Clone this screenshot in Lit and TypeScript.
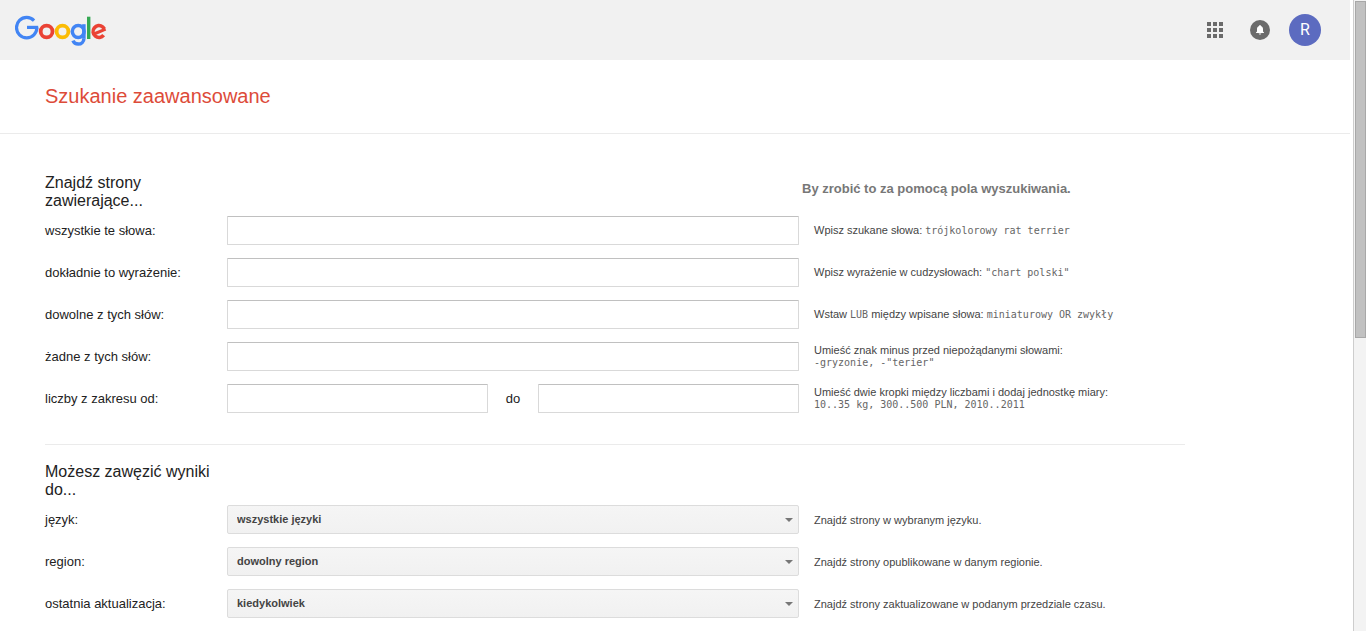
import { LitElement, html, css, svg, TemplateResult } from "lit";
import { customElement } from "lit/decorators.js";

interface Field {
  id: string;
  label: string;
  hint: TemplateResult;
  options?: string[];
  range?: boolean;
}

const code = (text: string) => html`<span class="mono">${text}</span>`;

const QUERY_FIELDS: Field[] = [
  { id: "all", label: "wszystkie te słowa:", hint: html`Wpisz szukane słowa: ${code("trójkolorowy rat terrier")}` },
  { id: "exact", label: "dokładnie to wyrażenie:", hint: html`Wpisz wyrażenie w cudzysłowach: ${code('"chart polski"')}` },
  { id: "any", label: "dowolne z tych słów:", hint: html`Wstaw ${code("LUB")} między wpisane słowa: ${code("miniaturowy OR zwykły")}` },
  { id: "none", label: "żadne z tych słów:", hint: html`Umieść znak minus przed niepożądanymi słowami:<br />${code('-gryzonie, -"terier"')}` },
  { id: "from", label: "liczby z zakresu od:", range: true, hint: html`Umieść dwie kropki między liczbami i dodaj jednostkę miary:<br />${code("10..35 kg, 300..500 PLN, 2010..2011")}` },
];

const FILTER_FIELDS: Field[] = [
  { id: "lang", label: "język:", options: ["wszystkie języki"], hint: html`Znajdź strony w wybranym języku.` },
  { id: "region", label: "region:", options: ["dowolny region"], hint: html`Znajdź strony opublikowane w danym regionie.` },
  { id: "updated", label: "ostatnia aktualizacja:", options: ["kiedykolwiek"], hint: html`Znajdź strony zaktualizowane w podanym przedziale czasu.` },
];

@customElement("app-header")
export class AppHeader extends LitElement {
  static styles = css`
    :host {
      display: flex;
      align-items: center;
      justify-content: space-between;
      height: 60px;
      padding: 0 29px 0 15px;
      background: #f1f1f1;
    }
    .logo, .logo svg, .icon svg { display: block; }
    .tools { display: flex; align-items: center; gap: 19px; }
    .icon {
      display: block;
      padding: 0;
      border: 0;
      background: none;
    }
    .apps { margin-right: 8px; }
    .avatar {
      width: 32px;
      height: 32px;
      padding: 0;
      border: 0;
      border-radius: 50%;
      background: #5c6bc0;
      color: #fff;
      font: 16px/32px Roboto, "Liberation Sans", sans-serif;
    }
  `;

  render() {
    const dots = [0, 6, 12].flatMap((y) =>
      [0, 6, 12].map((x) => svg`<rect x=${x} y=${y} width="4" height="4" fill="#6b6b6b"></rect>`)
    );
    return html`
      <a class="logo" href="#" aria-label="Google">
        <svg width="92" height="32" viewBox="15 14 92 32" fill="none" stroke-width="3.8">
          <g stroke="#4285f4" stroke-width="3.2">
            <circle cx="26.7" cy="27.6" r="10.2" pathLength="360" stroke-dasharray="316 44"></circle>
            <line x1="27" y1="27.4" x2="38.2" y2="27.4"></line>
          </g>
          <circle cx="46.6" cy="31.5" r="5.9" stroke="#ea4335"></circle>
          <circle cx="62.5" cy="31.5" r="5.9" stroke="#fbbc05"></circle>
          <g stroke="#4285f4" stroke-width="3.5">
            <circle cx="78.2" cy="31.5" r="5.9"></circle>
            <line x1="83.9" y1="24.2" x2="83.9" y2="38.7"></line>
            <circle cx="78.2" cy="38.4" r="5.7" pathLength="360" stroke-dasharray="156 204"></circle>
          </g>
          <line x1="88.7" y1="16.7" x2="88.7" y2="39" stroke="#34a853" stroke-width="3.4"></line>
          <g stroke="#ea4335">
            <circle cx="99" cy="31.5" r="5.9" stroke-width="3.6" pathLength="360" stroke-dasharray="296 64" transform="rotate(38 99 31.5)"></circle>
            <line x1="94" y1="34" x2="105.6" y2="29.1" stroke-width="3"></line>
          </g>
        </svg>
      </a>
      <div class="tools">
        <button class="icon apps" aria-label="Aplikacje">
          <svg width="16" height="16" viewBox="0 0 16 16">${dots}</svg>
        </button>
        <button class="icon" aria-label="Powiadomienia">
          <svg width="20" height="20" viewBox="0 0 20 20">
            <circle cx="10" cy="10" r="10" fill="#6b6b6b"></circle>
            <path fill="#fff" d="M10 5c-.6 0-.9.4-.9.9C7.6 6.300 7 7.600 7 9v2.500l-1 1V13h8v-.5l-1-1V9c0-1.400-.6-2.700-2.100-3.100C10.900 5.400 10.600 5 10 5zM8.800 13.500c0 .6.500 1 1.200 1s1.200-.4 1.200-1z"></path>
          </svg>
        </button>
        <button class="avatar" aria-label="Konto">R</button>
      </div>
    `;
  }
}

@customElement("app-root")
export class AppRoot extends LitElement {
  static styles = css`
    :host {
      display: flex;
      min-height: 100vh;
      background: #fff;
      color: #222;
      font: 13px/16px "Liberation Sans", Arial, sans-serif;
    }
    .page { flex: 1; min-width: 0; }
    .title {
      margin: 0;
      padding: 24px 45px 25px;
      border-bottom: 1px solid #ebebeb;
      color: #dd4b39;
      font-size: 20px;
      line-height: 24px;
      font-weight: normal;
    }
    .form {
      max-width: 1140px;
      margin: 0 45px;
      padding-top: 22px;
    }
    .section { padding-top: 18px; }
    .section + .section {
      margin-top: 31px;
      border-top: 1px solid #ebebeb;
    }
    .row {
      display: grid;
      grid-template-columns: 182px minmax(0, 1fr) 386px;
      align-items: center;
      height: 29px;
      margin-bottom: 13px;
    }
    .row.head { height: auto; margin-bottom: 6px; }
    .heading {
      margin: 0;
      font-size: 16px;
      line-height: 18px;
      font-weight: normal;
    }
    .note {
      grid-column: 3;
      align-self: start;
      margin: 0;
      padding: 7px 0 0 3px;
      color: #777;
      font-weight: bold;
    }
    .hint {
      padding-left: 15px;
      color: #444;
      font-size: 11px;
      line-height: 12px;
    }
    .mono {
      color: #666;
      font-family: "DejaVu Sans Mono", monospace;
      font-size: 10px;
    }
    .control { display: flex; align-items: center; }
    .text, .select {
      box-sizing: border-box;
      flex: 1;
      min-width: 0;
      height: 29px;
      margin: 0;
    }
    .text {
      padding: 0 8px;
      border: 1px solid #d9d9d9;
      border-top-color: #c0c0c0;
      border-radius: 1px;
      background: #fff;
      font: inherit;
    }
    .to { width: 50px; text-align: center; }
    .select {
      appearance: none;
      padding: 0 24px 0 9px;
      border: 1px solid #dcdcdc;
      border-radius: 2px;
      background: linear-gradient(#f5f5f5, #f1f1f1);
      color: #444;
      font: bold 11px/27px "Liberation Sans", Arial, sans-serif;
    }
    .select-box { display: flex; flex: 1; position: relative; }
    .arrow {
      position: absolute;
      right: 6px;
      top: 13px;
      border: 4px solid transparent;
      border-top-color: #777;
      border-bottom: 0;
      pointer-events: none;
    }
    .scrollbar {
      box-sizing: border-box;
      width: 13px;
      margin-left: 3px;
      padding: 1px 0 0 1px;
      border-left: 1px solid #cdcdcd;
      background: #f3f3f3;
    }
    .thumb {
      box-sizing: border-box;
      height: 337px;
      border: 1px solid #a8a8a8;
      background: #c1c1c1;
    }
  `;

  private control(field: Field) {
    if (field.options) {
      return html`<span class="select-box">
        <select class="select" id=${field.id}>
          ${field.options.map((option) => html`<option>${option}</option>`)}
        </select>
        <span class="arrow"></span>
      </span>`;
    }
    if (field.range) {
      return html`<input class="text" type="text" id=${field.id} />
        <label class="to" for="to">do</label>
        <input class="text" type="text" id="to" />`;
    }
    return html`<input class="text" type="text" id=${field.id} />`;
  }

  private row(field: Field) {
    return html`<div class="row">
      <label for=${field.id}>${field.label}</label>
      <div class="control">${this.control(field)}</div>
      <div class="hint">${field.hint}</div>
    </div>`;
  }

  render() {
    return html`
      <div class="page">
        <app-header></app-header>
        <h1 class="title">Szukanie zaawansowane</h1>
        <form class="form">
          <section class="section">
            <div class="row head">
              <h2 class="heading">Znajdź strony zawierające...</h2>
              <p class="note">By zrobić to za pomocą pola wyszukiwania.</p>
            </div>
            ${QUERY_FIELDS.map((field) => this.row(field))}
          </section>
          <section class="section">
            <div class="row head">
              <h2 class="heading">Możesz zawęzić wyniki do...</h2>
            </div>
            ${FILTER_FIELDS.map((field) => this.row(field))}
          </section>
        </form>
      </div>
      <div class="scrollbar" aria-hidden="true"><div class="thumb"></div></div>
    `;
  }
}
